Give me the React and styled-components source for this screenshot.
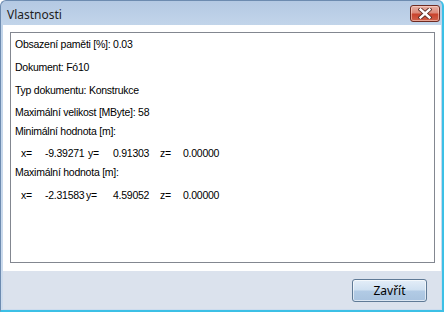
import React from "react";
import styled, { createGlobalStyle } from "styled-components";

const Global = createGlobalStyle`
  html, body { margin: 0; padding: 0; background: #ffffff; }
  body { width: 444px; height: 312px; overflow: hidden; }
`;

const Window = styled.div`
  box-sizing: border-box;
  width: 444px;
  height: 312px;
  display: flex;
  flex-direction: column;
  border-top: 1px solid #6d8bb0;
  border-left: 1px solid #6d8bb0;
  border-right: 2px solid #3cc0e6;
  border-bottom: 2px solid #3cc0e6;
  border-radius: 6px 6px 0 0;
  background: linear-gradient(#b4c9e3 0px, #c2d5ea 24px, #cddcee 100%);
  padding: 0 1px 1px 2px;
`;

const TitleBar = styled.div`
  height: 24px;
  flex: none;
  display: flex;
  align-items: flex-start;
  justify-content: space-between;
  padding-left: 4px;
  padding-right: 1px;
`;

const Title = styled.div`
  font-family: "Noto Sans", "Open Sans", sans-serif;
  font-size: 12px;
  color: #1e1e1e;
  line-height: 16px;
  margin-top: 6px;
`;

const CloseButton = styled.div`
  box-sizing: border-box;
  width: 30px;
  height: 17px;
  margin-top: 4px;
  border: 1px solid #6e2b22;
  border-radius: 3px;
  background: linear-gradient(#e8b1a6 0%, #dc8a7a 45%, #c9432d 55%, #d0624c 100%);
  box-shadow: inset 0 0 0 1px rgba(255, 220, 210, 0.55);
  display: flex;
  align-items: center;
  justify-content: center;
`;

const Client = styled.div`
  flex: 1;
  display: flex;
  flex-direction: column;
  background: #ffffff;
`;

const Body = styled.div`
  flex: 1;
  display: flex;
  padding: 7px 6px 8px 7px;
`;

const ListBox = styled.div`
  flex: 1;
  border: 1px solid #838790;
  padding: 2px 0 0 4px;
  font-family: "Liberation Sans", Arial, sans-serif;
  font-size: 10.5px;
  letter-spacing: -0.25px;
  color: #000;
`;

const Line = styled.div`
  line-height: 19px;
  height: 19px;
  white-space: pre;
  margin-bottom: ${(p) => p.$after}px;
`;

const CoordRow = styled.div`
  display: grid;
  grid-template-columns: 24px 37px 31px 34px 36px 35px;
  padding-left: 6px;
  line-height: 19px;
  height: 19px;
  margin-bottom: ${(p) => p.$after}px;
`;

const Key = styled.span`
  padding-left: ${(p) => p.$pad || 0}px;
`;

const Val = styled.span`
  text-align: right;
`;

const Footer = styled.div`
  height: 38px;
  flex: none;
  background: #dbe2ed;
  display: flex;
  justify-content: flex-end;
  align-items: flex-start;
  padding: 8px 14px 0 0;
  box-sizing: border-box;
`;

const Button = styled.div`
  box-sizing: border-box;
  width: 75px;
  height: 23px;
  border: 1px solid #5f7a96;
  border-radius: 3px;
  background: linear-gradient(#e4eef8 0%, #cfe0f1 48%, #b2cbe5 52%, #a9c3df 100%);
  box-shadow: inset 0 0 0 1px rgba(255, 255, 255, 0.6);
  display: flex;
  align-items: center;
  justify-content: center;
  font-family: "Noto Sans", "Open Sans", sans-serif;
  font-size: 12px;
  color: #000;
`;

function Coord({ x, y, z, yPad, after }) {
  return (
    <CoordRow $after={after}>
      <Key>x=</Key>
      <Val>{x}</Val>
      <Key $pad={yPad}>y=</Key>
      <Val>{y}</Val>
      <Key $pad={13}>z=</Key>
      <Val>{z}</Val>
    </CoordRow>
  );
}

export default function App() {
  return (
    <>
      <Global />
      <Window>
        <TitleBar>
          <Title>Vlastnosti</Title>
          <CloseButton>
            <svg width="14" height="11" viewBox="0 0 14 11">
              <path
                d="M2.5 1.5 L11.5 9.5 M11.5 1.5 L2.5 9.5"
                stroke="#5a2a22"
                strokeWidth="4.2"
                strokeLinecap="square"
              />
              <path
                d="M2.5 1.5 L11.5 9.5 M11.5 1.5 L2.5 9.5"
                stroke="#ffffff"
                strokeWidth="2.4"
                strokeLinecap="square"
              />
            </svg>
          </CloseButton>
        </TitleBar>
        <Client>
          <Body>
            <ListBox>
              <Line $after={4}>Obsazení paměti [%]: 0.03</Line>
              <Line $after={4}>Dokument: Fó10</Line>
              <Line $after={3}>Typ dokumentu: Konstrukce</Line>
              <Line $after={0}>Maximální velikost [MByte]: 58</Line>
              <Line $after={3}>Minimální hodnota [m]:</Line>
              <Coord x="-9.39271" y="0.91303" z="0.00000" yPad={6} after={0} />
              <Line $after={4}>Maximální hodnota [m]:</Line>
              <Coord x="-2.31583" y="4.59052" z="0.00000" yPad={4} after={0} />
            </ListBox>
          </Body>
          <Footer>
            <Button>Zavřít</Button>
          </Footer>
        </Client>
      </Window>
    </>
  );
}
